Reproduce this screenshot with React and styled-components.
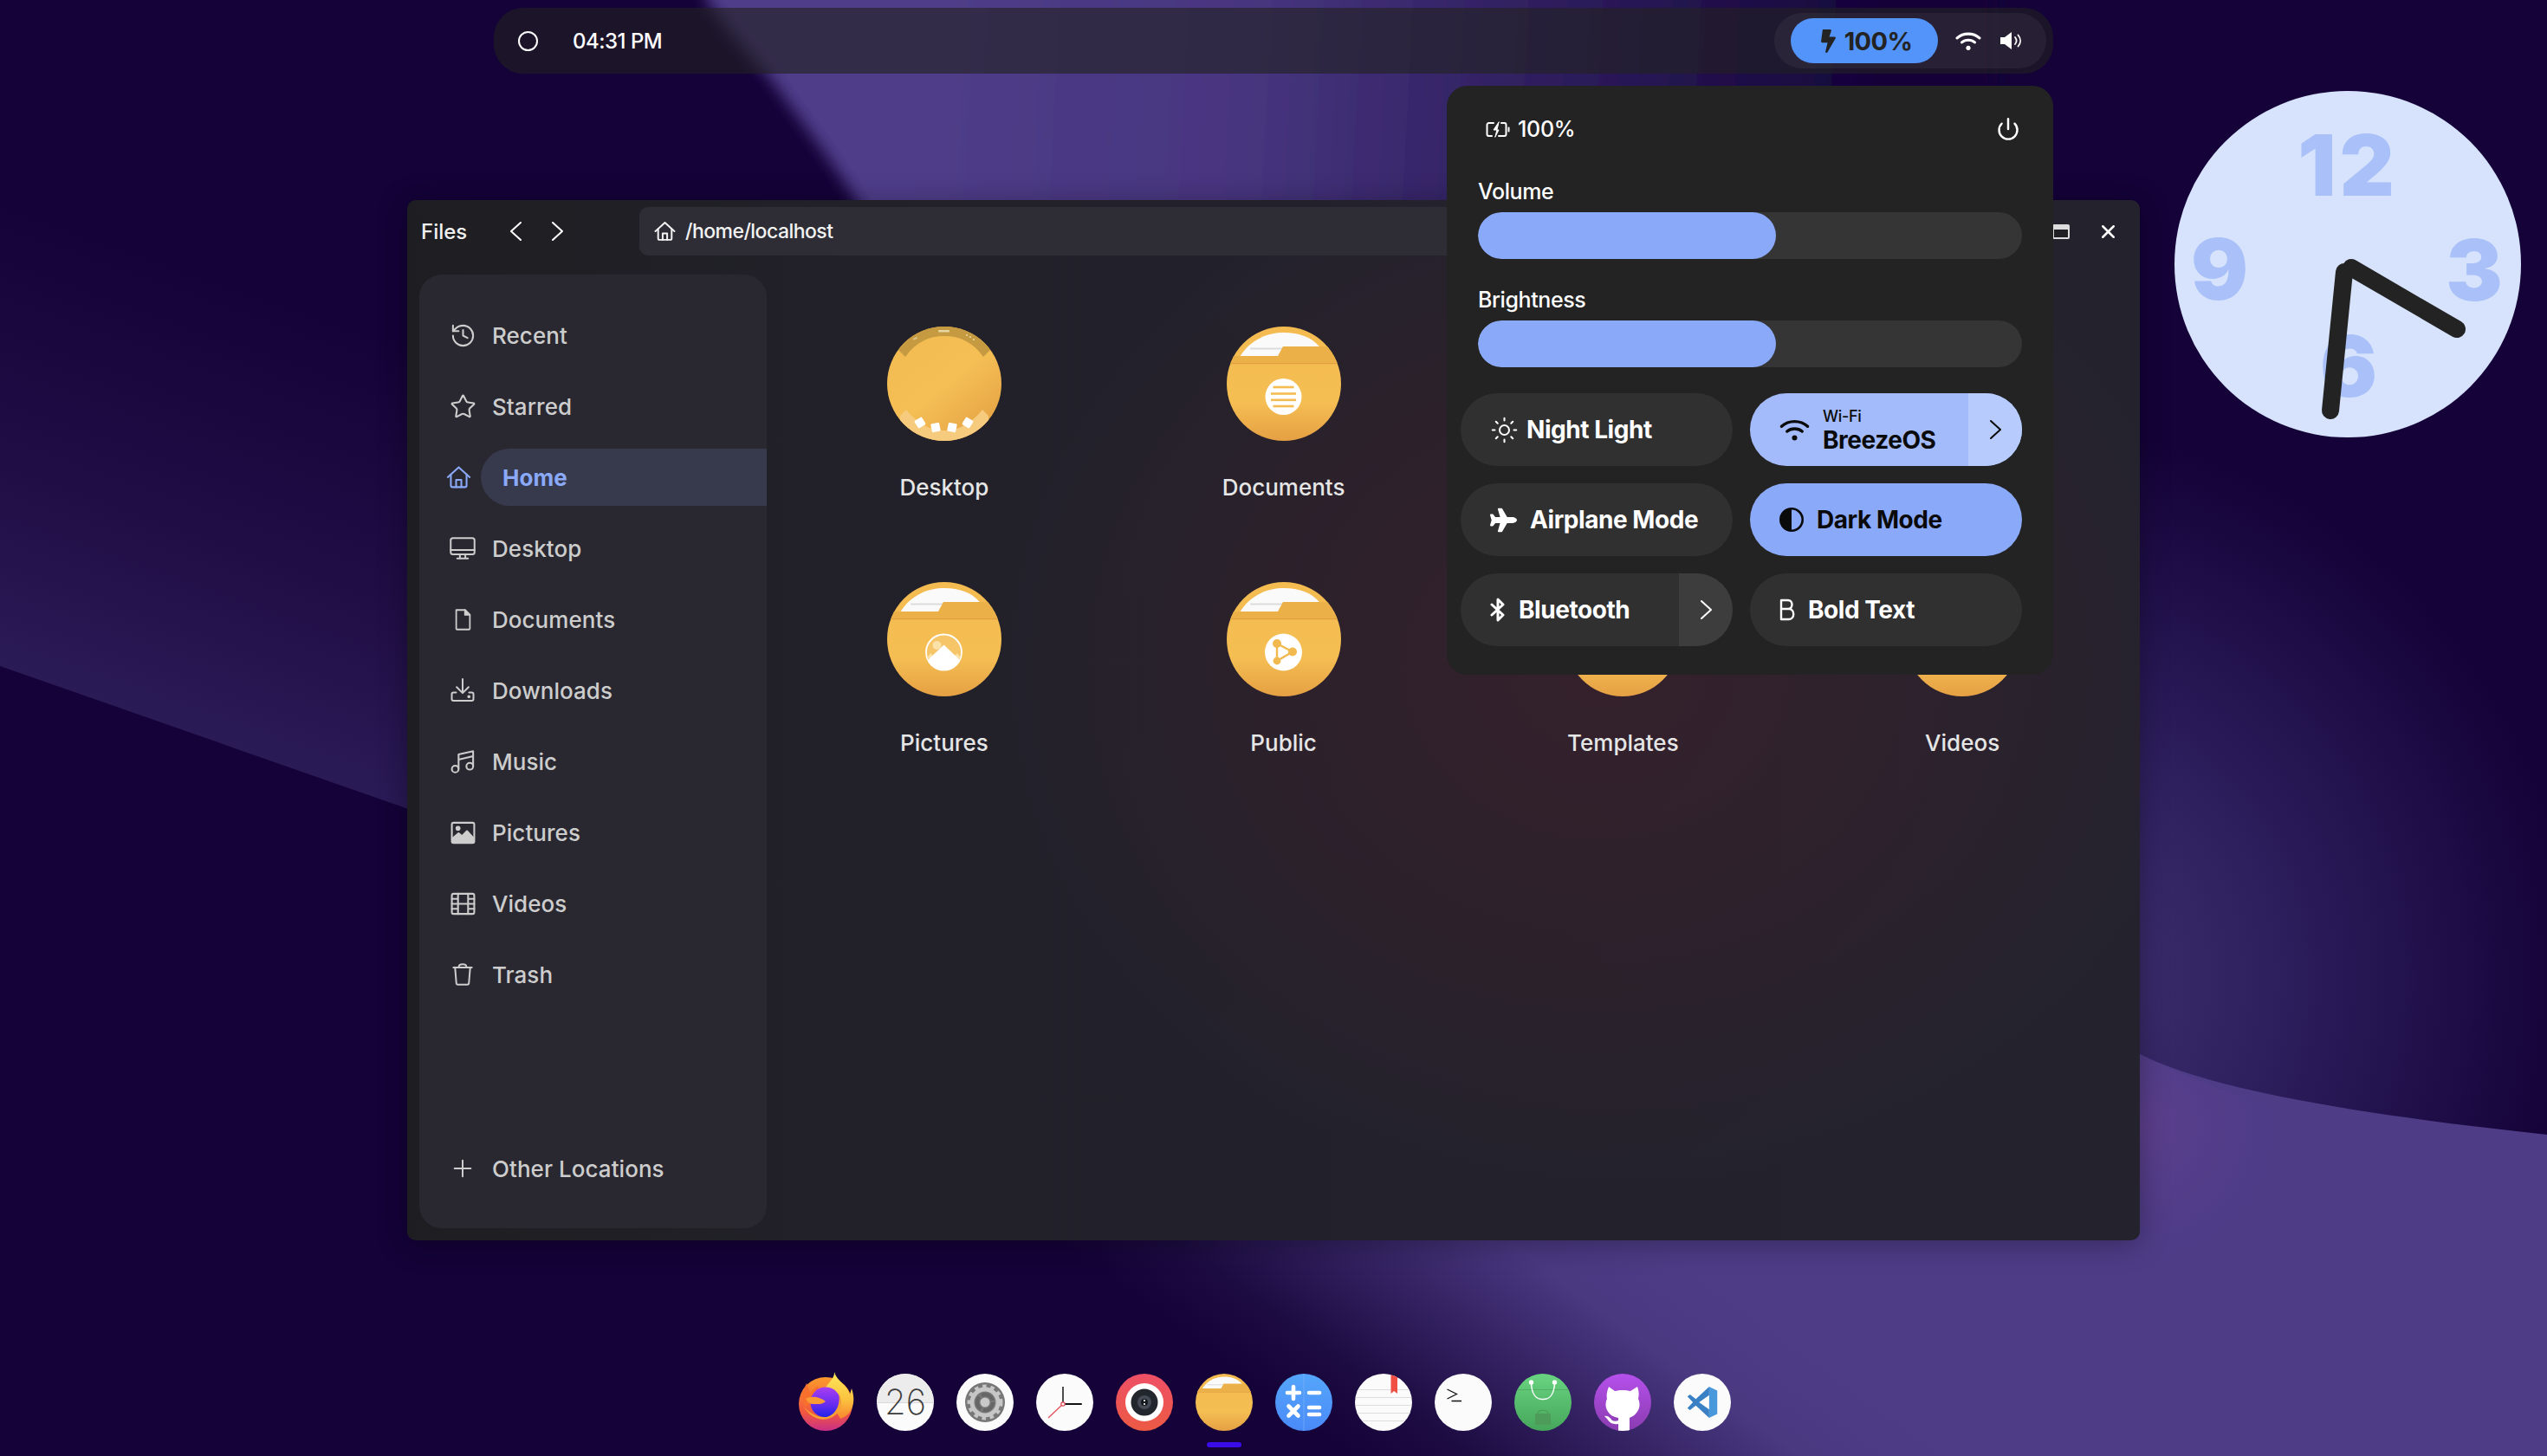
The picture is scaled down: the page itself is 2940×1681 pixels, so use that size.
import React from 'react';
import styled, { createGlobalStyle } from 'styled-components';
import { FaPlane, FaBolt } from 'react-icons/fa';
import { History, Star, Power, Sun, Plus, X } from 'lucide-react';

const Global = createGlobalStyle`
  html, body { margin: 0; padding: 0; background: #140238; overflow: hidden; }
  * { box-sizing: border-box; }
  #root { font-family: Inter, "Noto Sans", sans-serif; }
`;

const Desktop = styled.div`
  position: relative; width: 2940px; height: 1681px; overflow: hidden;
  display: flex; flex-direction: column; background: #140238; color: #fff;
`;
const Wallpaper = styled.svg`position: absolute; inset: 0; width: 2940px; height: 1681px;`;
const Defs = styled.svg`position: absolute; width: 0; height: 0;`;

const TopBar = styled.header`
  position: relative; margin: 9px 0 0 570px; width: 1800px; height: 76px; flex: none;
  border-radius: 34px; background: rgba(34,34,34,.62);
  display: flex; align-items: center; justify-content: space-between; padding-left: 28px;
`;
const ClockGroup = styled.div`display: flex; align-items: center; gap: 40px;`;
const Ring = styled.span`display: block; width: 23px; height: 23px; border: 2px solid #fff; border-radius: 50%;`;
const Time = styled.span`font-size: 24px; font-weight: 500; letter-spacing: -.5px;`;
const Status = styled.div`
  display: flex; align-items: center; height: 64px; width: 314px; margin-right: 8px;
  border-radius: 32px; background: rgba(255,255,255,.05); padding-left: 19px;
`;
const Battery = styled.div`
  width: 170px; height: 52px; border-radius: 26px; background: #5294fa; color: #232323;
  display: flex; align-items: center; justify-content: center; gap: 5px;
  font-size: 29px; font-weight: 700; letter-spacing: -.6px; margin-right: 20px;
`;
const StatusIcons = styled.div`display: flex; align-items: center; gap: 21px;`;

const Window = styled.main`
  position: relative; margin: 146px 0 0 470px; width: 2000px; height: 1201px; flex: none;
  border-radius: 10px; padding: 8px 0 14px 14px;
  display: flex; flex-direction: column;
  background:
    radial-gradient(ellipse 700px 600px at 1380px 540px, rgba(60,32,44,.7) 0%, rgba(60,32,44,.36) 55%, rgba(60,32,44,0) 100%),
    linear-gradient(90deg, #1e1e22 0%, #22212a 30%, #24232d 100%);
  box-shadow: 0 4px 34px rgba(0,0,0,.32);
`;
const WinHeader = styled.div`display: flex; align-items: center; height: 56px; margin-bottom: 22px; flex: none;`;
const Title = styled.span`width: 87px; padding-left: 2px; font-size: 24px; font-weight: 500; color: #f0f0f0;`;
const NavButton = styled.span`width: 48px; display: flex; justify-content: center; align-items: center;`;
const Address = styled.div`
  flex: 1; height: 56px; margin: 0 40px 0 71px; border-radius: 10px; background: #2e2d35;
  display: flex; align-items: center; gap: 11px; padding-left: 17px;
  font-size: 23px; font-weight: 500; letter-spacing: -.55px; color: #f3f3f3;
`;
const WinControls = styled.div`display: flex; align-items: center; gap: 32px; padding-right: 24px;`;
const MaxIcon = styled.span`
  display: block; width: 20px; height: 17px; border: 2px solid #ddd; border-top-width: 6px;
  border-radius: 2px; background: #1f1f24;
`;
const Content = styled.div`flex: 1; display: flex; min-height: 0;`;

const Sidebar = styled.nav`
  width: 401px; flex: none; display: flex; flex-direction: column; padding: 29px 0 28px;
  border-radius: 26px; background: #292830; color: #cdcdcd;
`;
const Row = styled.div`
  height: 82px; display: flex; align-items: center; padding-left: ${p => (p.$active ? '20px' : '25px')};
  margin-top: ${p => (p.$bottom ? 'auto' : '0')};
  color: ${p => (p.$active ? '#8aa9f8' : 'inherit')};
`;
const RowIcon = styled.span`width: 50px; flex: none; display: flex; justify-content: center; align-items: center;`;
const RowLabel = styled.span`
  font-size: 26px; font-weight: 500; letter-spacing: .05px;
  ${p => p.$active ? `
    flex: 1; height: 66px; margin-left: 1px; padding-left: 25px; display: flex; align-items: center;
    border-radius: 33px 0 0 33px; background: #373a4d; font-weight: 700;
  ` : 'margin-left: 9px;'}
`;

const Grid = styled.section`
  display: grid; grid-template-columns: repeat(4, 391.75px); grid-auto-rows: 200px; row-gap: 95px;
  padding: 60px 0 0 9px; align-content: start;
`;
const Item = styled.div`display: flex; flex-direction: column; align-items: center;`;
const Disc = styled.span`
  display: block; width: ${p => p.$size}px; height: ${p => p.$size}px; border-radius: 50%; overflow: hidden; flex: none;
  background: ${p => p.$bg || 'transparent'};
  svg { display: block; width: 100%; height: 100%; }
`;
const ItemLabel = styled.span`margin-top: 38px; line-height: 32px; font-size: 26px; font-weight: 500; color: #e6e6e6;`;

const Panel = styled.aside`
  position: absolute; top: 99px; left: 1670px; width: 700px; height: 680px; border-radius: 24px;
  background: #232323; padding: 0 16px 33px; display: flex; flex-direction: column;
`;
const PanelHead = styled.div`
  height: 100px; margin: 0 20px 7px; padding: 0 2px 0 9px; flex: none;
  display: flex; align-items: center; justify-content: space-between;
`;
const PanelBattery = styled.div`display: flex; align-items: center; gap: 9px; font-size: 25px; font-weight: 500; letter-spacing: -.3px;`;
const SliderBlock = styled.div`margin: 0 20px ${p => p.$after}px;`;
const SliderLabel = styled.div`height: 30px; line-height: 30px; margin-bottom: 9px; font-size: 25px; font-weight: 500; letter-spacing: -.4px;`;
const Track = styled.div`height: 54px; border-radius: 27px; background: #353535; overflow: hidden;`;
const Fill = styled.div`height: 100%; border-radius: 27px; background: #8aa9f8;`;
const Toggles = styled.div`display: grid; grid-template-columns: 314px 314px; grid-auto-rows: 84px; gap: 20px;`;
const Toggle = styled.div`
  display: flex; border-radius: 42px; overflow: hidden;
  background: ${p => p.$bg || '#303030'}; color: ${p => (p.$bg ? '#0a0a0a' : '#fff')};
`;
const ToggleBody = styled.div`flex: 1; display: flex; align-items: center; gap: ${p => p.$gap || 15}px; padding-left: 34px;`;
const ToggleText = styled.span`font-size: 28px; font-weight: 700; letter-spacing: -.45px; line-height: 32px;`;
const ToggleStack = styled.div`display: flex; flex-direction: column;`;
const ToggleSmall = styled.span`font-size: 18px; font-weight: 500; line-height: 20px; letter-spacing: -.3px; margin-bottom: 1px; padding-top: 2px;`;
const ToggleArrow = styled.span`
  width: 62px; flex: none; display: flex; align-items: center; justify-content: center;
  background: ${p => p.$bg};
`;

const ClockWidget = styled.div`
  position: absolute; left: 2510px; top: 105px; width: 400px; height: 400px; border-radius: 50%;
  background: #d7e3fc;
`;
const Numeral = styled.span`
  position: absolute; left: ${p => p.$x}px; top: ${p => p.$y}px; transform: translate(-50%, -50%);
  font-size: 98px; font-weight: 900; line-height: 1; color: #a9c1f8; letter-spacing: ${p => p.$track || 0}px;
`;
const Hands = styled.svg`position: absolute; inset: 0; width: 400px; height: 400px;`;

const Dock = styled.footer`
  position: relative; margin-top: 153px; padding-left: 920px; display: flex; align-items: center; gap: 26px; height: 68px; flex: none;
`;
const DockItem = styled.div`position: relative; width: 66px; height: 66px; flex: none;`;
const Running = styled.span`
  position: absolute; left: 13px; top: 79px; width: 40px; height: 6px; border-radius: 3px; background: #3a0ce8;
`;
const FireSvg = styled.svg`display: block; width: 66px; height: 68px; margin-top: -2px; overflow: visible;`;

const Chevron = ({ left, w = 11, h = 20, c = '#fff', sw = 2 }) => (
  <svg width={w + 2} height={h + 2} viewBox={`0 0 ${w + 2} ${h + 2}`} fill="none" stroke={c} strokeWidth={sw} strokeLinecap="round" strokeLinejoin="round">
    {left ? <path d={`M${w + 1} 1 L1 ${h / 2 + 1} L${w + 1} ${h + 1}`} /> : <path d={`M1 1 L${w + 1} ${h / 2 + 1} L1 ${h + 1}`} />}
  </svg>
);
const HomeGlyph = ({ size = 29, c = 'currentColor', sw = 1.7 }) => (
  <svg width={size} height={size} viewBox="0 0 24 24" fill="none" stroke={c} strokeWidth={sw} strokeLinecap="round" strokeLinejoin="round">
    <path d="M1.5 11.5 L12 2 L22.5 11.5" /><path d="M4.5 9 V19.5 a1.5 1.5 0 0 0 1.5 1.5 H18 a1.5 1.5 0 0 0 1.5 -1.5 V9" /><path d="M9.5 21 V14 H14.5 V21" />
  </svg>
);
const S = ({ children, size = 29, fill = 'none', sw = 1.6 }) => (
  <svg width={size} height={size} viewBox="0 0 24 24" fill={fill} stroke="currentColor" strokeWidth={sw} strokeLinecap="round" strokeLinejoin="round">{children}</svg>
);
const SIDE = [
  ['Recent', <History size={31} strokeWidth={1.6} />],
  ['Starred', <Star size={31} strokeWidth={1.6} />],
  ['Home', <HomeGlyph />],
  ['Desktop', <S size={30}><rect x="1" y="2.5" width="22" height="15" rx="2" /><path d="M1 13.5 H23 M9.5 17.5 V21 M14.5 17.5 V21 M7 21.3 H17" /></S>],
  ['Documents', <S size={27}><path d="M5 2 H14 L19 7 V21 a1 1 0 0 1 -1 1 H6 a1 1 0 0 1 -1 -1 Z" /><path d="M14 2 L19 7 H14 Z" fill="currentColor" /></S>],
  ['Downloads', <S size={30}><path d="M12 1.5 V14 M6.5 9 L12 14.5 L17.5 9" /><path d="M6 14 H3.5 a1.5 1.5 0 0 0 -1.5 1.5 V20 a1.5 1.5 0 0 0 1.5 1.5 H20.5 a1.5 1.5 0 0 0 1.5 -1.5 V15.5 a1.5 1.5 0 0 0 -1.5 -1.5 H18" /><circle cx="17.8" cy="17.8" r=".7" /></S>],
  ['Music', <S size={31}><path d="M8 18 V5.5 L21 2.5 V16 M8 10 L21 7" /><circle cx="5" cy="18.5" r="3" /><circle cx="18" cy="16" r="3" /></S>],
  ['Pictures', <S size={31}><rect x="2" y="3" width="20" height="18" rx="1.5" /><circle cx="7.5" cy="8" r="1.4" fill="currentColor" /><path d="M2.5 20.5 V17 L8 12.5 L11 15 L15.5 10.5 L21.5 17 V20.5 Z" fill="currentColor" /></S>],
  ['Videos', <S size={31}><rect x="2" y="3" width="20" height="18" rx="1.5" /><path d="M7.5 3 V21 M16.5 3 V21 M2 12 H22 M2 7.5 H7.5 M2 16.5 H7.5 M16.5 7.5 H22 M16.5 16.5 H22" /></S>],
  ['Trash', <S size={30}><path d="M3.5 5.5 H20.5 M5 5.5 L6.2 20 a1.5 1.5 0 0 0 1.5 1.4 H16.3 a1.5 1.5 0 0 0 1.5 -1.4 L19 5.5 M8.5 5 C8.5 1.7 15.5 1.7 15.5 5" /></S>],
];

const Folder = ({ glyph, size = 132 }) => (
  <Disc $size={size}>
    <svg viewBox="0 0 132 132">
      <rect width="132" height="132" fill="url(#folderBody)" />
      <path d="M15 35 C28 14 48 7 66 7 C84 7 97 12 107 23 V35 Z" fill="#fafafa" />
      <path d="M27 25.5 H66" stroke="#dcdcdc" strokeWidth="2" />
      <path d="M0 34 H59 L65 23 H132 V42 H0 Z" fill="#ecb048" />
      <rect y="42" width="132" height="1.2" fill="#e29f42" />
      {glyph}
    </svg>
  </Disc>
);
const DesktopFolder = () => (
  <Disc $size={132}>
    <svg viewBox="0 0 132 132">
      <rect width="132" height="132" fill="url(#deskBody)" />
      <path d="M12 26 L21 35 C33 18 48 11 66 11 C84 11 99 18 111 35 L120 26 V0 H12 Z" fill="#c59a40" />
      <rect x="59" y="4" width="13" height="2.4" rx="1" fill="#e8d6a4" />
      <rect x="30" y="13" width="5" height="2" fill="#dcc48a" transform="rotate(-25 32 14)" />
      <circle cx="92" cy="10" r="1.1" fill="#e8d6a4" /><circle cx="96" cy="12" r="1.1" fill="#e8d6a4" /><circle cx="100" cy="15" r="1.1" fill="#e8d6a4" />
      <path d="M15 103 L22 96 C35 112 50 120 66 120 C82 120 97 112 110 96 L117 103 V132 H15 Z" fill="#f7cb7e" />
      {[[38, 111, -32], [56, 116.5, -12], [75, 116.5, 12], [93, 111, 32]].map(([x, y, r]) => (
        <rect key={x} x={x - 5} y={y - 5} width="10" height="10" rx="1.5" fill="#fff" transform={`rotate(${r} ${x} ${y})`} />
      ))}
    </svg>
  </Disc>
);
const DocGlyph = () => (
  <g>
    <circle cx="65.5" cy="81" r="21" fill="#fff" />
    {[[70, 24], [77.5, 29], [84.8, 29], [92, 24]].map(([y, w]) => <rect key={y} x={65.5 - w / 2} y={y - 1.3} width={w} height="2.6" fill="#f4bc52" />)}
  </g>
);
const PicGlyph = () => (
  <g>
    <circle cx="65.5" cy="81" r="20.5" fill="rgba(255,255,255,.12)" stroke="#fff" strokeWidth="1.8" />
    <circle cx="57.5" cy="73" r="5" fill="#fae2a9" />
    <path d="M46 88 L50 82 L56 88 Z M85 88 L81 82 L75 88 Z" fill="#fae2a9" />
    <path d="M47 90 L65.6 72.5 L84 90 A20.5 20.5 0 0 1 47 90 Z" fill="#fff" />
  </g>
);
const ShareGlyph = () => (
  <g>
    <circle cx="65.5" cy="81" r="21.5" fill="#fff" />
    <path d="M58 71 L76 80.5 L58 91 Z" fill="none" stroke="#f2b94f" strokeWidth="2.4" />
    <circle cx="58" cy="71" r="5" fill="#f2b94f" /><circle cx="76" cy="80.5" r="5" fill="#f2b94f" /><circle cx="58" cy="91" r="4.4" fill="#f2b94f" />
  </g>
);
const FILES = [
  ['Desktop', <DesktopFolder />], ['Documents', <Folder glyph={<DocGlyph />} />], ['Downloads', <Folder />], ['Music', <Folder />],
  ['Pictures', <Folder glyph={<PicGlyph />} />], ['Public', <Folder glyph={<ShareGlyph />} />], ['Templates', <Folder />], ['Videos', <Folder />],
];

const WifiIcon = ({ w = 30, c = 'currentColor', sw = 3.2 }) => (
  <svg width={w} height={w * .76} viewBox="0 0 30 23" fill="none" stroke={c} strokeWidth={sw} strokeLinecap="round">
    <path d="M2 8 C9 1.5 21 1.5 28 8" /><path d="M7.5 13 C11.5 9.5 18.5 9.5 22.5 13" />
    <circle cx="15" cy="19.5" r="2.6" fill={c} stroke="none" />
  </svg>
);

const DockIcons = () => (
  <>
    <DockItem>
      <FireSvg viewBox="0 0 66 68">
        <circle cx="33" cy="37" r="31" fill="url(#ffBody)" />
        <path d="M43 0 C44 8 34 13 31 22 L50 54 C63 50 69 36 63 19 L61 26 C58 14 46 11 43 0 Z" fill="url(#ffFlame)" />
        <path d="M4 29 L11 13 L15 24 L24 16 L27 26 L10 40 Z" fill="#f8702d" />
        <circle cx="33" cy="35" r="17.5" fill="url(#ffGlobe)" />
        <path d="M10 31 C17 27 27 29 33 34 C29 38 24 37 19 37 C15 37 12 35 10 31 Z" fill="#fb9b35" />
        <path d="M48 24 C54 34 51 50 36 54 C24 57 13 50 8 40 C14 47 24 53 34 52 C44 50 51 38 48 24 Z" fill="#f9a033" />
      </FireSvg>
    </DockItem>
    <DockItem>
      <Disc $size={66}>
        <svg viewBox="0 0 66 66">
          <rect width="66" height="66" fill="#fbfbfb" /><rect width="66" height="33" fill="#ececec" /><rect y="33" width="66" height=".8" fill="#d2d2d2" />
          <text x="33" y="47" textAnchor="middle" fontFamily="Inter, sans-serif" fontSize="40" fontWeight="200" fill="#3c3c3c">26</text>
        </svg>
      </Disc>
    </DockItem>
    <DockItem>
      <Disc $size={66} $bg="#fbfbfb">
        <svg viewBox="0 0 66 66">
          <circle cx="33" cy="33" r="23" fill="#777" />
          <circle cx="33" cy="33" r="15" fill="none" stroke="#c6c6c6" strokeWidth="5" />
          <circle cx="33" cy="33" r="18.5" fill="none" stroke="#c6c6c6" strokeWidth="4" strokeDasharray="4.6 4.7" />
          <circle cx="33" cy="33" r="9" fill="none" stroke="#666" strokeWidth="4" strokeDasharray="16 3" />
          <circle cx="33" cy="33" r="5.5" fill="#c8c8c8" />
        </svg>
      </Disc>
    </DockItem>
    <DockItem>
      <Disc $size={66} $bg="#fbfbfb">
        <svg viewBox="0 0 66 66">
          <path d="M31 35 V15" stroke="#222" strokeWidth="1.6" /><path d="M31 35 H52" stroke="#111" strokeWidth="2" strokeLinecap="round" />
          <path d="M31 35 L14 51" stroke="#e5525c" strokeWidth="1.3" />
          <circle cx="31" cy="35" r="2.2" fill="#fff" stroke="#d8454f" strokeWidth="1.2" />
        </svg>
      </Disc>
    </DockItem>
    <DockItem>
      <Disc $size={66}>
        <svg viewBox="0 0 66 66">
          <rect width="66" height="66" fill="url(#camBody)" /><circle cx="33" cy="33" r="22" fill="#fff" />
          <circle cx="33" cy="33" r="15.5" fill="#22262d" /><circle cx="33" cy="33" r="8" fill="#444b55" /><circle cx="33" cy="33" r="4" fill="#15181d" />
          <circle cx="33" cy="31" r="1.1" fill="#fff" /><circle cx="33" cy="35" r="1.1" fill="#fff" />
        </svg>
      </Disc>
    </DockItem>
    <DockItem>
      <Folder size={66} /><Running />
    </DockItem>
    <DockItem>
      <Disc $size={66}>
        <svg viewBox="0 0 66 66" fill="none" stroke="#fff" strokeWidth="4.6" strokeLinecap="round">
          <rect width="66" height="66" fill="url(#calcBody)" stroke="none" />
          <path d="M33 0 V66" stroke="#7fb6fb" strokeWidth=".6" />
          <path d="M14 22 H28 M21 15 V29 M39 22 H51 M15.5 37.5 L26.5 48.5 M26.5 37.5 L15.5 48.5 M39 39 H51 M39 47 H51" />
        </svg>
      </Disc>
    </DockItem>
    <DockItem>
      <Disc $size={66} $bg="#fbfbfb">
        <svg viewBox="0 0 66 66">
          {[18, 27, 36, 45, 54].map(y => <rect key={y} y={y} width="66" height=".9" fill="#dadada" />)}
          <path d="M41.5 0 H49 V23 L45.2 20 L41.5 23 Z" fill="#f14f44" />
        </svg>
      </Disc>
    </DockItem>
    <DockItem>
      <Disc $size={66} $bg="#fbfbfb">
        <svg viewBox="0 0 66 66" fill="none" stroke="#111" strokeWidth="1.3">
          <path d="M14.5 18 L25.5 23.5 L14.5 29" /><path d="M19.5 31.5 H31" />
        </svg>
      </Disc>
    </DockItem>
    <DockItem>
      <Disc $size={66}>
        <svg viewBox="0 0 66 66">
          <rect width="66" height="66" fill="url(#storeBody)" /><rect y="18" width="66" height=".8" fill="#4fa863" />
          <path d="M19.5 10 C20 25 25 29.5 33 29.5 C41 29.5 46 25 46.5 10" fill="none" stroke="#fff" strokeWidth="1.5" />
          <circle cx="19.5" cy="10" r="2.7" fill="#fff" /><circle cx="46.5" cy="10" r="2.7" fill="#fff" />
          <rect x="24" y="46" width="18" height="13" fill="#4d9c5a" /><path d="M27 46 C27 41 39 41 39 46" fill="none" stroke="#4d9c5a" strokeWidth="1.2" />
        </svg>
      </Disc>
    </DockItem>
    <DockItem>
      <Disc $size={66}>
        <svg viewBox="0 0 66 66">
          <rect width="66" height="66" fill="url(#ghBody)" />
          <path fill="#fff" d="M17 15 L24 20 C29 18.5 37 18.5 42 20 L50 15 C52 20 52 25 51 29 C53 33 53 38 51 42 C48 48 43 50 41 51 V67 H28 V58 C22 59 18 57 15 52 L12 49 C17 48 19 52 21 54 C23 55 26 55 28 54 V51 C23 50 18 48 15 42 C13 38 13 33 15 29 C14 25 15 20 17 15 Z" />
        </svg>
      </Disc>
    </DockItem>
    <DockItem>
      <Disc $size={66} $bg="#fbfbfb">
        <svg viewBox="-38 -38 176 176">
          <path d="M71 2 L96 14 V86 L71 98 Z" fill="#4a98dc" />
          <path d="M71 2 L30 40 L12 26 L4 32 L21 50 L4 68 L12 74 L30 60 L71 98 V72 L40 50 L71 28 Z" fill="#3a80c4" />
        </svg>
      </Disc>
    </DockItem>
  </>
);

export default function App() {
  return (
    <Desktop>
      <Global />
      <Defs aria-hidden="true">
        <defs>
          <linearGradient id="folderBody" x1="0" y1="0" x2="0" y2="1"><stop offset="0" stopColor="#f3bb50" /><stop offset=".66" stopColor="#f5be53" /><stop offset="1" stopColor="#e5a043" /></linearGradient>
          <linearGradient id="deskBody" x1=".2" y1=".1" x2=".85" y2=".9"><stop offset="0" stopColor="#f3bc52" /><stop offset=".5" stopColor="#f5bf55" /><stop offset="1" stopColor="#e6a445" /></linearGradient>
          <linearGradient id="camBody" x1="0" y1="0" x2="0" y2="1"><stop offset="0" stopColor="#ee5066" /><stop offset="1" stopColor="#ec5a44" /></linearGradient>
          <linearGradient id="calcBody" x1="0" y1="0" x2="0" y2="1"><stop offset="0" stopColor="#55a6fb" /><stop offset="1" stopColor="#4a8af8" /></linearGradient>
          <linearGradient id="storeBody" x1="0" y1="0" x2="0" y2="1"><stop offset="0" stopColor="#68d480" /><stop offset="1" stopColor="#46a65b" /></linearGradient>
          <linearGradient id="ghBody" x1="0" y1="0" x2="0" y2="1"><stop offset="0" stopColor="#b650ec" /><stop offset="1" stopColor="#8a3cb0" /></linearGradient>
          <linearGradient id="ffBody" x1="0" y1="0" x2="0" y2="1"><stop offset="0" stopColor="#fb9a2c" /><stop offset=".65" stopColor="#f2583e" /><stop offset="1" stopColor="#c92f86" /></linearGradient>
          <linearGradient id="ffFlame" x1="0" y1="0" x2="0" y2="1"><stop offset="0" stopColor="#fde75a" /><stop offset=".6" stopColor="#fbc23f" /><stop offset="1" stopColor="#f8852e" /></linearGradient>
          <linearGradient id="ffGlobe" x1="0" y1="0" x2="0" y2="1"><stop offset="0" stopColor="#a83ef2" /><stop offset=".55" stopColor="#6a2df0" /><stop offset="1" stopColor="#1f24e8" /></linearGradient>
        </defs>
      </Defs>
      <Wallpaper viewBox="0 0 2940 1681" aria-hidden="true">
        <defs>
          <filter id="wpSoft" x="-5%" y="-5%" width="110%" height="110%"><feGaussianBlur stdDeviation="9" /></filter>
          <linearGradient id="wpTop" gradientUnits="userSpaceOnUse" x1="1050" y1="0" x2="2180" y2="60"><stop offset="0" stopColor="#503d8a" /><stop offset=".35" stopColor="#47357f" /><stop offset=".65" stopColor="#2e1e5e" /><stop offset="1" stopColor="#140238" /></linearGradient>
          <linearGradient id="wpLeft" gradientUnits="userSpaceOnUse" x1="0" y1="769" x2="170" y2="290"><stop offset="0" stopColor="#2a1a56" /><stop offset=".45" stopColor="#200d45" /><stop offset="1" stopColor="#140238" /></linearGradient>
          <radialGradient id="wpRight" gradientUnits="userSpaceOnUse" cx="2330" cy="1130" r="640"><stop offset="0" stopColor="#443578" /><stop offset=".45" stopColor="#2e1f5e" /><stop offset="1" stopColor="#140238" /></radialGradient>
          <linearGradient id="wpLow" gradientUnits="userSpaceOnUse" x1="1450" y1="1600" x2="1690" y2="1270"><stop offset="0" stopColor="#140238" /><stop offset=".2" stopColor="#1d0c42" /><stop offset=".75" stopColor="#4a3881" /><stop offset="1" stopColor="#4e3c87" /></linearGradient>
          <radialGradient id="wpGlow" gradientUnits="userSpaceOnUse" cx="2470" cy="1300" r="180"><stop offset="0" stopColor="#5d3f8d" /><stop offset=".5" stopColor="#563e8b" stopOpacity=".6" /><stop offset="1" stopColor="#4e3c87" stopOpacity="0" /></radialGradient>
        </defs>
        <rect width="2940" height="1681" fill="#140238" />
        <path d="M815 -40 L815 0 C845 40 870 70 885 85 C925 140 960 185 994 240 L1010 600 H2300 V-40 Z" fill="url(#wpTop)" filter="url(#wpSoft)" />
        <path d="M0 769 L480 937 V0 H0 Z" fill="url(#wpLeft)" />
        <rect x="2300" y="380" width="640" height="1000" fill="url(#wpRight)" />
        <path d="M1100 1217 H2470 C2560 1262 2750 1290 2960 1312 V1700 H1100 Z" fill="url(#wpLow)" />
        <path d="M2300 1217 H2470 C2560 1262 2620 1275 2660 1285 V1500 H2300 Z" fill="url(#wpGlow)" />
      </Wallpaper>

      <TopBar>
        <ClockGroup><Ring /><Time>04:31 PM</Time></ClockGroup>
        <Status>
          <Battery><FaBolt size={27} />100%</Battery>
          <StatusIcons>
            <WifiIcon />
            <svg width="26" height="22" viewBox="0 0 26 22" fill="#fff">
              <path d="M1 7 H6 L14 1 V21 L6 15 H1 Z" />
              <path d="M18 7 C20 9.5 20 12.5 18 15 M21.5 4.5 C25 8.5 25 13.5 21.5 17.5" fill="none" stroke="#fff" strokeWidth="1.8" strokeLinecap="round" />
            </svg>
          </StatusIcons>
        </Status>
      </TopBar>

      <Window>
        <WinHeader>
          <Title>Files</Title>
          <NavButton><Chevron left /></NavButton>
          <NavButton><Chevron /></NavButton>
          <Address><HomeGlyph size={25} c="#f3f3f3" sw={1.9} />/home/localhost</Address>
          <WinControls>
            <MaxIcon />
            <X size={25} strokeWidth={2.4} color="#fff" />
          </WinControls>
        </WinHeader>
        <Content>
          <Sidebar>
            {SIDE.map(([name, icon]) => (
              <Row key={name} $active={name === 'Home'}>
                <RowIcon>{icon}</RowIcon>
                <RowLabel $active={name === 'Home'}>{name}</RowLabel>
              </Row>
            ))}
            <Row $bottom>
              <RowIcon><Plus size={32} strokeWidth={1.5} /></RowIcon>
              <RowLabel>Other Locations</RowLabel>
            </Row>
          </Sidebar>
          <Grid>
            {FILES.map(([name, icon]) => (
              <Item key={name}>{icon}<ItemLabel>{name}</ItemLabel></Item>
            ))}
          </Grid>
        </Content>
      </Window>

      <Panel>
        <PanelHead>
          <PanelBattery>
            <svg width="28" height="19" viewBox="0 0 28 19" fill="none" stroke="#fff" strokeWidth="2" strokeLinejoin="round" strokeLinecap="round">
              <path d="M9 2 H3.5 A2 2 0 0 0 1.5 4 V15 A2 2 0 0 0 3.5 17 H7 M18 2 H21.5 A2 2 0 0 1 23.5 4 V15 A2 2 0 0 1 21.5 17 H15 M26.5 7.5 V11.5" />
              <path d="M15 1 L9 10 H15 L11 18 Z" fill="#fff" strokeWidth="1" />
            </svg>
            100%
          </PanelBattery>
          <Power size={28} strokeWidth={2.1} />
        </PanelHead>
        <SliderBlock $after={32}>
          <SliderLabel>Volume</SliderLabel>
          <Track><Fill style={{ width: '344px' }} /></Track>
        </SliderBlock>
        <SliderBlock $after={30}>
          <SliderLabel>Brightness</SliderLabel>
          <Track><Fill style={{ width: '344px' }} /></Track>
        </SliderBlock>
        <Toggles>
          <Toggle><ToggleBody $gap={9}><Sun size={33} strokeWidth={1.5} /><ToggleText>Night Light</ToggleText></ToggleBody></Toggle>
          <Toggle $bg="#a3bbfa">
            <ToggleBody><WifiIcon w={35} c="#0a0a0a" sw={3} /><ToggleStack><ToggleSmall>Wi-Fi</ToggleSmall><ToggleText>BreezeOS</ToggleText></ToggleStack></ToggleBody>
            <ToggleArrow $bg="#b8cbfd"><Chevron c="#0a0a0a" /></ToggleArrow>
          </Toggle>
          <Toggle><ToggleBody><FaPlane size={31} /><ToggleText>Airplane Mode</ToggleText></ToggleBody></Toggle>
          <Toggle $bg="#8aa9f8">
            <ToggleBody>
              <svg width="28" height="28" viewBox="0 0 28 28"><circle cx="14" cy="14" r="12.7" fill="none" stroke="#0a0a0a" strokeWidth="2.6" /><path d="M14 1.3 A12.7 12.7 0 0 0 14 26.7 Z" fill="#0a0a0a" /></svg>
              <ToggleText>Dark Mode</ToggleText>
            </ToggleBody>
          </Toggle>
          <Toggle>
            <ToggleBody>
              <svg width="18" height="28" viewBox="0 0 18 28" fill="none" stroke="#fff" strokeWidth="3" strokeLinejoin="round" strokeLinecap="round"><path d="M2 8 L15 20 L9 26 V2 L15 8 L2 20" /></svg>
              <ToggleText>Bluetooth</ToggleText>
            </ToggleBody>
            <ToggleArrow $bg="#3d3d3d"><Chevron /></ToggleArrow>
          </Toggle>
          <Toggle>
            <ToggleBody>
              <svg width="18" height="26" viewBox="0 0 18 26" fill="none" stroke="#fff" strokeWidth="2.4" strokeLinejoin="round"><path d="M2 2 H10 C16 2 16 12 10 12 H2 Z M2 12 H11 C18 12 18 24 11 24 H2 Z" /></svg>
              <ToggleText>Bold Text</ToggleText>
            </ToggleBody>
          </Toggle>
        </Toggles>
      </Panel>

      <ClockWidget>
        <Numeral $x={200} $y={86} $track={4}>12</Numeral>
        <Numeral $x={346} $y={207}>3</Numeral>
        <Numeral $x={52} $y={206}>9</Numeral>
        <Numeral $x={201} $y={318}>6</Numeral>
        <Hands viewBox="0 0 400 400" fill="none" stroke="#232323" strokeWidth="20" strokeLinecap="round">
          <path d="M204 204 L326 275" /><path d="M196 209 L180 369" />
        </Hands>
      </ClockWidget>

      <Dock><DockIcons /></Dock>
    </Desktop>
  );
}
